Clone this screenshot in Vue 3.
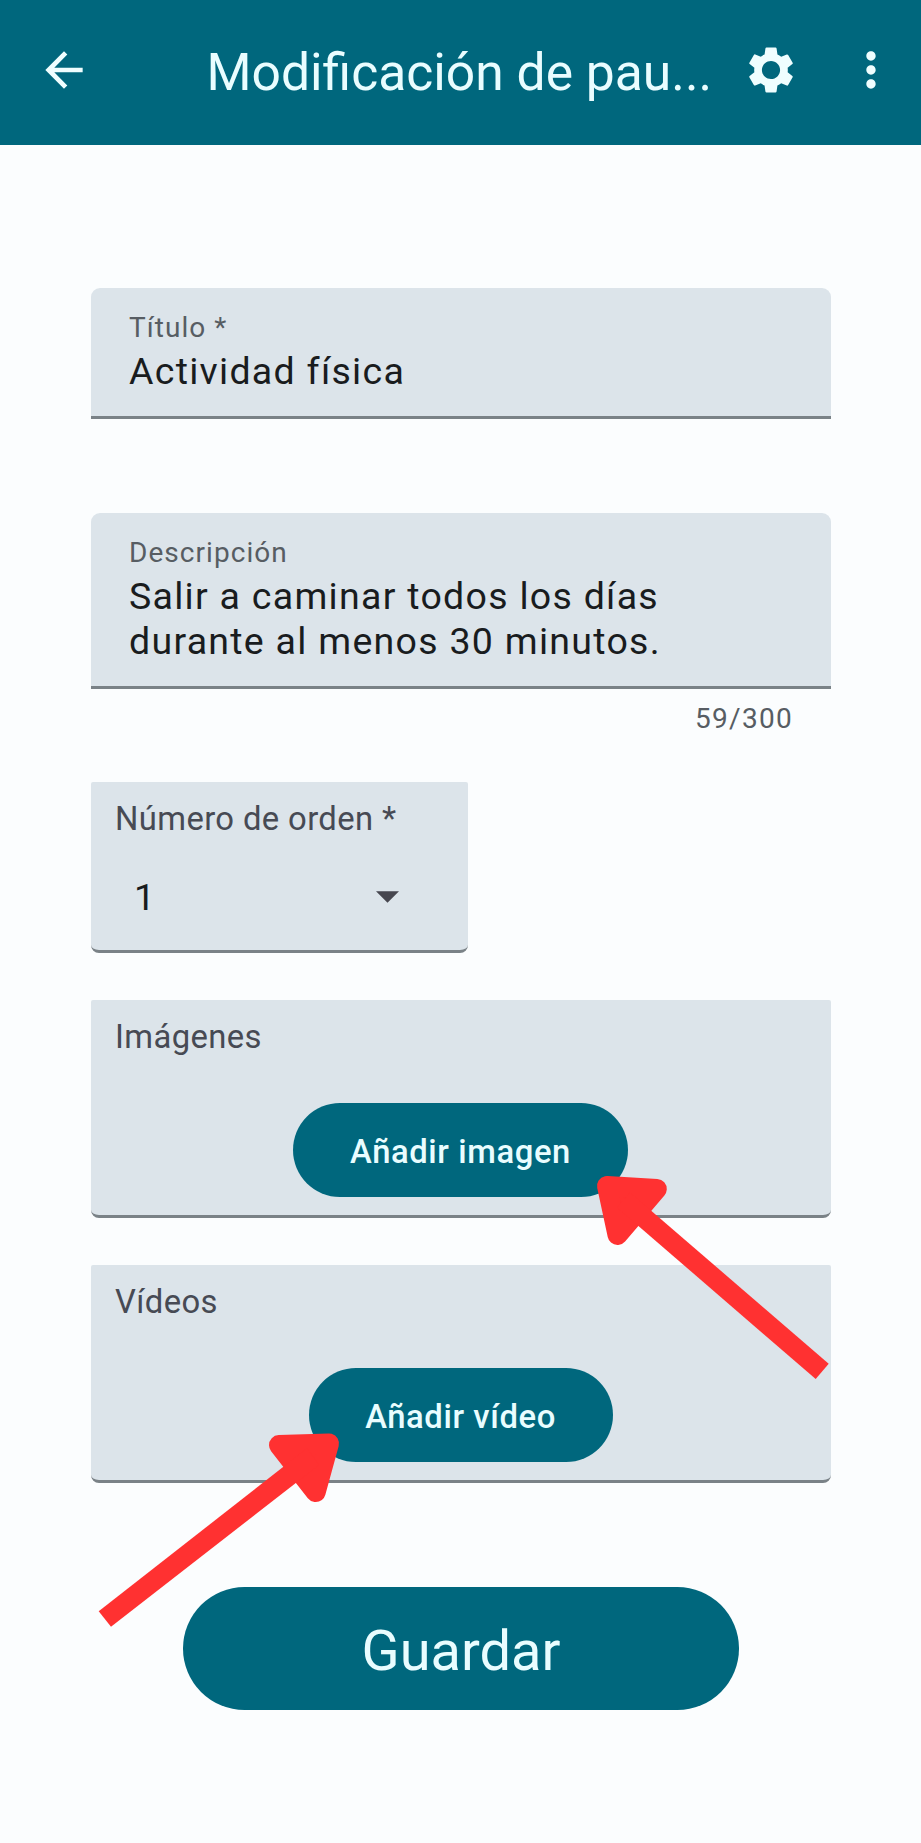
<script setup>
const title = 'Modificación de pau...'
const description = ['Salir a caminar todos los días', 'durante al menos 30 minutos.']
const media = [
  { label: 'Imágenes', action: 'Añadir imagen', kind: 'image' },
  { label: 'Vídeos', action: 'Añadir vídeo', kind: 'video' },
]
</script>

<template>
  <div class="screen">
    <header class="bar">
      <svg class="icon" viewBox="0 0 24 24"><path d="M20 11H7.83l5.59-5.59L12 4l-8 8 8 8 1.41-1.41L7.83 13H20v-2z" /></svg>
      <h1 class="title">{{ title }}</h1>
      <svg class="icon gear" viewBox="0 0 24 24"><path d="M19.14 12.94c.04-.3.06-.61.06-.94 0-.32-.02-.64-.07-.94l2.03-1.58c.18-.14.23-.41.12-.61l-1.92-3.32c-.12-.22-.37-.29-.59-.22l-2.39.96c-.5-.38-1.03-.7-1.62-.94l-.36-2.54c-.04-.24-.24-.41-.48-.41h-3.84c-.24 0-.43.17-.47.41l-.36 2.54c-.59.24-1.13.57-1.62.94l-2.39-.96c-.22-.08-.47 0-.59.22L2.74 8.87c-.12.21-.08.47.12.61l2.03 1.58c-.05.3-.09.63-.09.94s.02.64.07.94l-2.03 1.58c-.18.14-.23.41-.12.61l1.92 3.32c.12.22.37.29.59.22l2.39-.96c.5.38 1.03.7 1.62.94l.36 2.54c.05.24.24.41.48.41h3.84c.24 0 .44-.17.47-.41l.36-2.54c.59-.24 1.13-.56 1.62-.94l2.39.96c.22.08.47 0 .59-.22l1.92-3.32c.12-.22.07-.47-.12-.61l-2.01-1.58zM12 15.9c-2.15 0-3.9-1.75-3.9-3.9s1.75-3.9 3.9-3.9 3.9 1.75 3.9 3.9-1.75 3.9-3.9 3.9z" /></svg>
      <svg class="icon more" viewBox="0 0 24 24"><path d="M12 8c1.1 0 2-.9 2-2s-.9-2-2-2-2 .9-2 2 .9 2 2 2zm0 2c-1.1 0-2 .9-2 2s.9 2 2 2 2-.9 2-2-.9-2-2-2zm0 6c-1.1 0-2 .9-2 2s.9 2 2 2 2-.9 2-2-.9-2-2-2z" /></svg>
    </header>

    <main class="form">
      <section class="field text-field">
        <div class="small-label">Título *</div>
        <div class="value">Actividad física</div>
      </section>

      <section class="field text-field description">
        <div class="small-label">Descripción</div>
        <div v-for="line in description" :key="line" class="value">{{ line }}</div>
      </section>
      <div class="counter">59/300</div>

      <section class="field box order">
        <div class="label">Número de orden *</div>
        <div class="select">
          <span>1</span>
          <svg class="caret" viewBox="0 0 22 11"><path d="M0 0h22L11 11z" /></svg>
        </div>
      </section>

      <section v-for="item in media" :key="item.kind" class="field box media">
        <div class="label">{{ item.label }}</div>
        <button class="add" :class="item.kind">{{ item.action }}</button>
      </section>

      <button class="save">Guardar</button>
    </main>

    <svg class="pointers" viewBox="0 0 921 1843">
      <path class="head" d="M607 1186L656.8 1189L617.5 1235Z" />
      <path d="M630 1192.5L828.7 1363.7L815.7 1379L617 1207.5Z" />
      <path class="head" d="M329 1443.5L279 1445L315.7 1492Z" />
      <path d="M307 1448.3L98.7 1611.3L111 1626.7L319 1465Z" />
    </svg>
  </div>
</template>

<style>
body { background: #fbfdfe; }
</style>

<style scoped>
.screen {
  position: relative;
  width: 921px;
  height: 1843px;
  overflow: hidden;
  background: #fbfdfe;
  font-family: Roboto, "Liberation Sans", sans-serif;
  color: #191c1e;
}
.bar {
  box-sizing: border-box;
  display: flex;
  height: 145px;
  padding: 42.3px 22px 0 36px;
  background: #00677d;
}
.icon {
  flex: none;
  width: 56px;
  height: 56px;
  fill: #effeff;
}
.title {
  flex: none;
  width: 536.5px;
  margin: 1px 0 0 114.5px;
  font-size: 51.6px;
  font-weight: 400;
  line-height: 60px;
  white-space: nowrap;
  color: #e9fdff;
}
.more { margin-left: 44px; }
.form {
  display: flex;
  flex-direction: column;
  align-items: flex-start;
  padding: 143px 90px 0 91px;
}
.field {
  box-sizing: border-box;
  width: 740px;
  background: #dce4ea;
  border-bottom: 3px solid #7a8287;
}
.text-field {
  height: 131px;
  padding: 23px 38px 0;
  border-radius: 9px 9px 0 0;
}
.small-label {
  height: 38px;
  line-height: 34px;
  font-size: 28px;
  letter-spacing: 1.05px;
  color: #575d63;
}
.value {
  line-height: 44.5px;
  font-size: 37.5px;
  letter-spacing: 1.28px;
  white-space: nowrap;
}
.description {
  height: 176px;
  margin-top: 94px;
}
.counter {
  align-self: flex-end;
  height: 34px;
  margin: 13px 38px 0 0;
  line-height: 34px;
  font-size: 28px;
  letter-spacing: 1.3px;
  color: #575d63;
}
.box {
  padding: 17px 25px 0 24px;
  border-radius: 2px 2px 8px 8px;
}
.label {
  height: 40px;
  line-height: 41px;
  font-size: 32.8px;
  letter-spacing: 0.38px;
  color: #474a54;
}
.order {
  width: 377px;
  height: 171px;
  margin-top: 46px;
}
.select {
  display: flex;
  align-items: center;
  justify-content: space-between;
  height: 44px;
  margin: 36px 44px 0 19px;
  font-size: 37.5px;
  line-height: 44px;
}
.caret {
  width: 23px;
  height: 12px;
  fill: #46464f;
}
.media {
  display: flex;
  flex-direction: column;
  align-items: center;
  height: 218px;
  margin-top: 47px;
}
.media .label { align-self: flex-start; }
button {
  flex: none;
  padding: 0;
  border: 0;
  background: #00677d;
  color: #e9fdff;
  font-family: inherit;
}
.add {
  width: 335px;
  height: 94px;
  margin-top: 46px;
  padding-top: 3px;
  border-radius: 47px;
  font-size: 32.8px;
  font-weight: 500;
  letter-spacing: 0.6px;
}
.video { width: 304px; }
.save {
  align-self: center;
  width: 556px;
  height: 123px;
  margin-top: 104px;
  padding-top: 5px;
  border-radius: 62px;
  font-size: 56px;
}
.pointers {
  position: absolute;
  inset: 0;
  width: 921px;
  height: 1843px;
  fill: #ff3131;
  pointer-events: none;
}
.head {
  stroke: #ff3131;
  stroke-width: 20px;
  stroke-linejoin: round;
}
</style>
